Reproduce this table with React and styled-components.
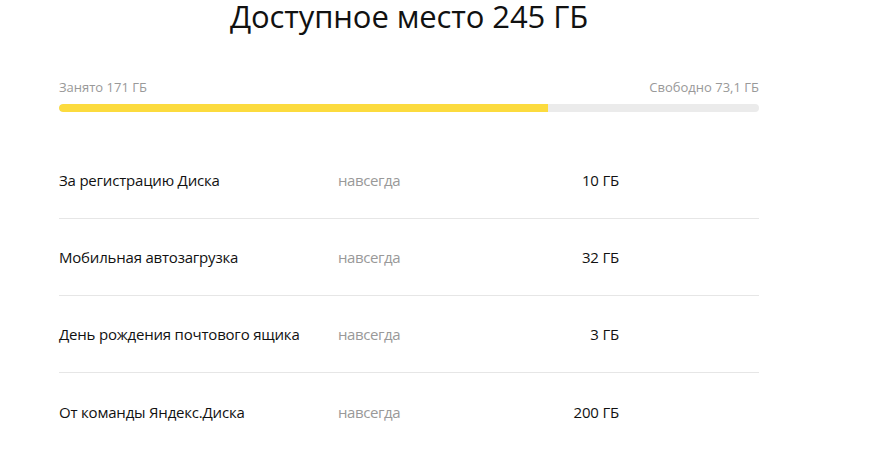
import React from "react";
import styled, { createGlobalStyle } from "styled-components";

const Global = createGlobalStyle`
  html, body { margin: 0; padding: 0; background: #fff; }
  body { font-family: "Open Sans", "Noto Sans", sans-serif; color: #000; }
`;

const Page = styled.div`
  width: 700px;
  margin-left: 59px;
  display: flex;
  flex-direction: column;
`;

const Title = styled.h1`
  margin: 0;
  font-size: 31px;
  line-height: 32px;
  font-weight: 400;
  letter-spacing: -0.1px;
  text-align: center;
  color: #111;
`;

const Legend = styled.div`
  display: flex;
  justify-content: space-between;
  margin-top: 46px;
  font-size: 13px;
  line-height: 18px;
  color: #999;
`;

const Track = styled.div`
  margin-top: 8px;
  height: 8px;
  border-radius: 4px;
  background: #ebebeb;
  overflow: hidden;
`;

const Fill = styled.div`
  height: 100%;
  background: #fcdb3e;
  border-radius: 4px 0 0 4px;
`;

const List = styled.div`
  margin-top: 30px;
  display: flex;
  flex-direction: column;
`;

const Row = styled.div`
  display: grid;
  grid-template-columns: 279px 161px 120px;
  align-items: center;
  height: 77px;
  box-sizing: border-box;
  border-bottom: ${(p) => (p.$last ? "none" : "1px solid #e6e6e6")};
  font-size: 15px;
  letter-spacing: -0.2px;
`;

const Name = styled.span`
  color: #111;
`;

const Term = styled.span`
  color: #999;
  letter-spacing: -0.4px;
`;

const Amount = styled.span`
  text-align: right;
  color: #111;
`;

const rows = [
  ["За регистрацию Диска", "10 ГБ"],
  ["Мобильная автозагрузка", "32 ГБ"],
  ["День рождения почтового ящика", "3 ГБ"],
  ["От команды Яндекс.Диска", "200 ГБ"],
];

export default function App() {
  const used = 171;
  const total = 245;
  return (
    <Page>
      <Global />
      <Title>Доступное место 245 ГБ</Title>
      <Legend>
        <span>Занято 171 ГБ</span>
        <span>Свободно 73,1 ГБ</span>
      </Legend>
      <Track>
        <Fill style={{ width: `${(used / total) * 100}%` }} />
      </Track>
      <List>
        {rows.map(([name, amount], i) => (
          <Row key={name} $last={i === rows.length - 1}>
            <Name>{name}</Name>
            <Term>навсегда</Term>
            <Amount>{amount}</Amount>
          </Row>
        ))}
      </List>
    </Page>
  );
}
